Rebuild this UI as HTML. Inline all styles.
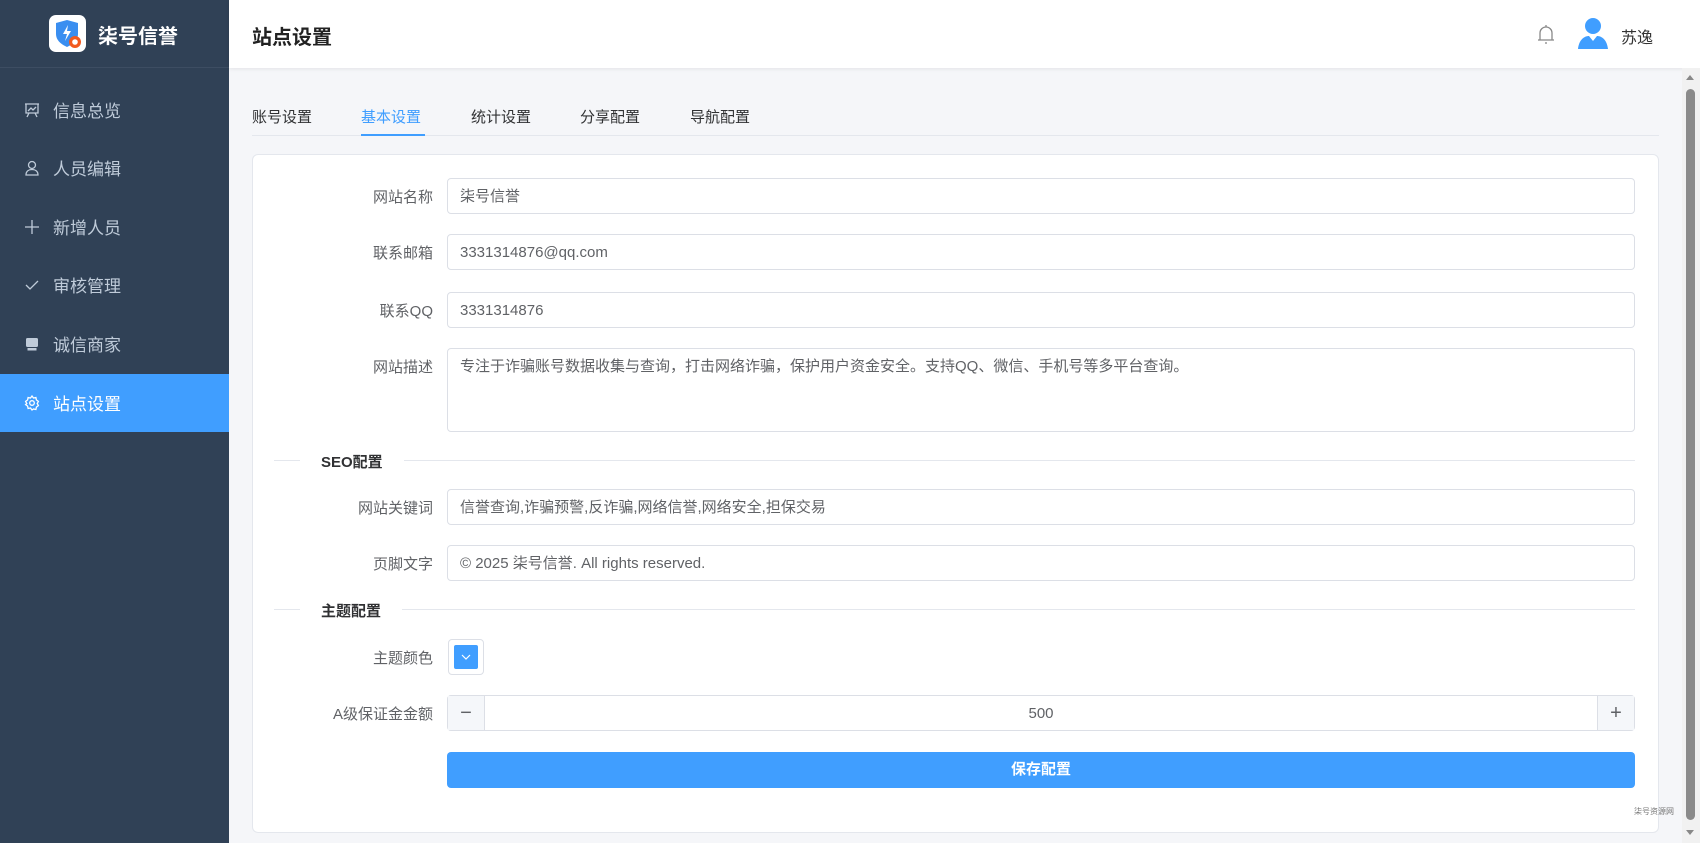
<!DOCTYPE html>
<html><head><meta charset="utf-8"><style>
*{box-sizing:border-box;margin:0;padding:0}
body{width:1700px;height:843px;overflow:hidden;background:#f5f6f9;font-family:"Liberation Sans","Noto Sans CJK SC",sans-serif;position:relative}
.side{position:absolute;left:0;top:0;width:229px;height:843px;background:#304156}
.logo{height:68px;border-bottom:1px solid #3d4d62;position:relative}
.logo .box{position:absolute;left:49px;top:15px;width:37px;height:37px;background:#fff;border-radius:7px}
.logo .t{position:absolute;left:98px;top:20px;color:#fff;font-size:20px;font-weight:bold}
.mi{position:absolute;left:0;width:229px;height:58px;color:#bfcbd9;font-size:17px;line-height:58px}
.mi svg{position:absolute;left:24px;top:21px}
.mi span{position:absolute;left:53px;top:2px}
.mi.act{background:#409eff;color:#fff}
.hdr{position:absolute;left:229px;top:0;right:0;height:68px;background:#fff;box-shadow:0 1px 4px rgba(0,0,0,.08)}
.hdr .t{position:absolute;left:23px;top:21px;font-size:20px;font-weight:bold;color:#222}
.tab{position:absolute;top:106px;font-size:15px;color:#303133}
.card{position:absolute;left:252px;top:154px;width:1407px;height:679px;background:#fff;border:1px solid #e4e7ed;border-radius:6px}
.lb{position:absolute;width:200px;left:233px;text-align:right;font-size:15px;color:#606266;height:36px;line-height:39px}
.in{position:absolute;left:447px;width:1188px;height:36px;border:1px solid #dcdfe6;border-radius:4px;font-size:15px;color:#606266;padding:0 12px;line-height:35px}
.dv{position:absolute;left:274px;width:1361px;height:1px;background:#e4e7ed}
.dt{position:absolute;left:300px;background:#fff;padding:0 21px;font-size:15px;font-weight:bold;color:#303133}
</style></head><body>
<div class="side">
 <div class="logo"><div class="box">
  <svg width="37" height="37" viewBox="0 0 37 37"><path d="M7 8 L18 5 L29 8 L29 19 Q29 27 18 32 Q7 27 7 19 Z" fill="#3a8ef0"/><path d="M19 10 L14 19 L18 19 L16 26 L22 16 L18 16 Z" fill="#fff"/><circle cx="26" cy="27" r="6" fill="#f25a1f"/><circle cx="26" cy="27" r="2.8" fill="#fff"/></svg>
 </div><div class="t">柒号信誉</div></div>
 <div class="mi" style="top:81px"><svg width="16" height="16" viewBox="0 0 16 16" fill="none" stroke="#bfcbd9" stroke-width="1.3"><path d="M1 2h14M2 2v9h12V2M4 9l3-3 2 2 3-3M5 11l-2 4M11 11l2 4"/></svg><span>信息总览</span></div>
 <div class="mi" style="top:139px"><svg width="16" height="16" viewBox="0 0 16 16" fill="none" stroke="#bfcbd9" stroke-width="1.3"><circle cx="8" cy="5" r="3.5"/><path d="M2 15c0-4 3-5.5 6-5.5s6 1.5 6 5.5z"/></svg><span>人员编辑</span></div>
 <div class="mi" style="top:198px"><svg width="16" height="16" viewBox="0 0 16 16" stroke="#bfcbd9" stroke-width="1.3"><path d="M8 1v14M1 8h14"/></svg><span>新增人员</span></div>
 <div class="mi" style="top:256px"><svg width="16" height="16" viewBox="0 0 16 16" fill="none" stroke="#bfcbd9" stroke-width="1.3"><path d="M2 8l4 4 8-8"/></svg><span>审核管理</span></div>
 <div class="mi" style="top:315px"><svg width="16" height="16" viewBox="0 0 16 16" fill="#bfcbd9"><rect x="2" y="2" width="12" height="9" rx="1.5"/><rect x="3.5" y="12" width="9" height="2.5"/></svg><span>诚信商家</span></div>
 <div class="mi act" style="top:374px"><svg width="16" height="16" viewBox="0 0 16 16" fill="none" stroke="#fff" stroke-width="1.3"><path d="M8 1l1.5 2 2.4-.5.5 2.4 2 1.5-1.2 2.1 1.2 2.1-2 1.5-.5 2.4-2.4-.5L8 15l-1.5-2-2.4.5-.5-2.4-2-1.5L2.8 8.5 1.6 6.4l2-1.5.5-2.4 2.4.5z"/><circle cx="8" cy="8" r="2.3"/></svg><span>站点设置</span></div>
</div>
<div class="hdr"><div class="t">站点设置</div>
 <svg style="position:absolute;left:1307px;top:24px" width="20" height="22" viewBox="0 0 20 22" fill="none" stroke="#888" stroke-width="1.3"><path d="M4 16V9a6 6 0 0 1 12 0v7M2 16h16M10 18v2M10 1v2"/></svg>
 <svg style="position:absolute;left:1348px;top:17px" width="32" height="32" viewBox="0 0 32 32" fill="#409eff"><circle cx="16" cy="9" r="8"/><path d="M1 32c1-9 6-13 11-13l4 5 4-5c5 0 10 4 11 13z"/></svg>
 <div style="position:absolute;left:1392px;top:24px;font-size:16px;color:#333">苏逸</div>
</div>
<div style="position:absolute;left:1682px;top:68px;width:18px;height:775px;background:#f1f1f1"></div>
<div style="position:absolute;left:1686px;top:89px;width:9px;height:731px;background:#8a8a8a;border-radius:5px"></div>
<div style="position:absolute;left:1686px;top:75px;border:4px solid transparent;border-bottom:5px solid #888;border-top:0"></div>
<div style="position:absolute;left:1686px;top:830px;border:4px solid transparent;border-top:5px solid #888;border-bottom:0"></div>
<div class="tab" style="left:252px">账号设置</div>
<div class="tab" style="left:361px;color:#409eff">基本设置</div>
<div class="tab" style="left:471px">统计设置</div>
<div class="tab" style="left:580px">分享配置</div>
<div class="tab" style="left:690px">导航配置</div>
<div style="position:absolute;left:252px;top:135px;width:1407px;height:1px;background:#e4e7ed"></div>
<div style="position:absolute;left:361px;top:134px;width:64px;height:2px;background:#409eff"></div>
<div class="card"></div>
<div class="lb" style="top:178px">网站名称</div><div class="in" style="top:178px">柒号信誉</div>
<div class="lb" style="top:234px">联系邮箱</div><div class="in" style="top:234px">3331314876@qq.com</div>
<div class="lb" style="top:292px">联系QQ</div><div class="in" style="top:292px">3331314876</div>
<div class="lb" style="top:348px">网站描述</div><div class="in" style="top:348px;height:84px;line-height:22px;padding-top:7px">专注于诈骗账号数据收集与查询，打击网络诈骗，保护用户资金安全。支持QQ、微信、手机号等多平台查询。</div>
<div class="dv" style="top:460px"></div><div class="dt" style="top:451px">SEO配置</div>
<div class="lb" style="top:489px">网站关键词</div><div class="in" style="top:489px">信誉查询,诈骗预警,反诈骗,网络信誉,网络安全,担保交易</div>
<div class="lb" style="top:545px">页脚文字</div><div class="in" style="top:545px">© 2025 柒号信誉. All rights reserved.</div>
<div class="dv" style="top:609px"></div><div class="dt" style="top:600px">主题配置</div>
<div class="lb" style="top:639px">主题颜色</div>
<div style="position:absolute;left:448px;top:639px;width:36px;height:36px;border:1px solid #dcdfe6;border-radius:4px;padding:5px"><div style="width:24px;height:24px;background:#409eff;border-radius:2px;display:flex;align-items:center;justify-content:center"><svg width="10" height="6" viewBox="0 0 10 6" fill="none" stroke="#fff" stroke-width="1.2"><path d="M1 1l4 4 4-4"/></svg></div></div>
<div class="lb" style="top:695px">A级保证金金额</div>
<div class="in" style="top:695px;padding:0;text-align:center">500
 <div style="position:absolute;left:0;top:0;width:37px;height:34px;background:#f5f7fa;border-right:1px solid #dcdfe6;color:#606266;font-size:20px">−</div>
 <div style="position:absolute;right:0;top:0;width:37px;height:34px;background:#f5f7fa;border-left:1px solid #dcdfe6;color:#606266;font-size:20px">+</div>
</div>
<div style="position:absolute;left:447px;top:752px;width:1188px;height:36px;background:#409eff;border-radius:4px;color:#fff;font-size:15px;font-weight:bold;text-align:center;line-height:36px">保存配置</div>
<div style="position:absolute;left:1634px;top:806px;font-size:8px;color:#777">柒号资源网</div>
</body></html>
